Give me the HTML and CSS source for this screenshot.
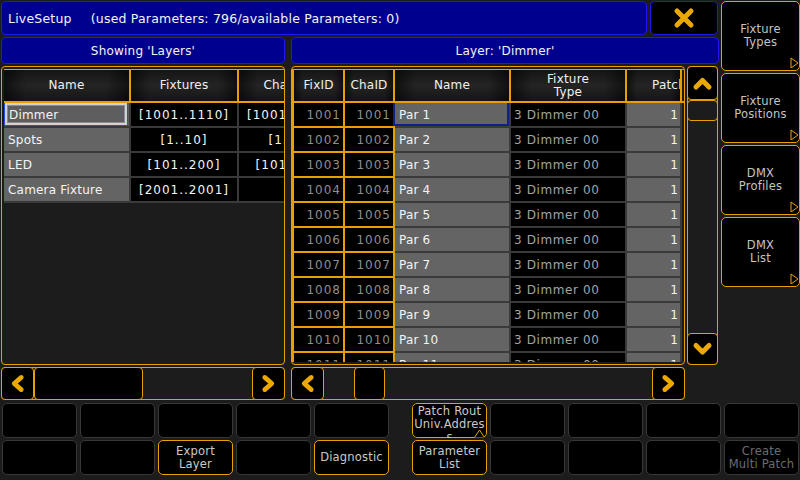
FILE: index.html
```html
<!DOCTYPE html>
<html>
<head>
<meta charset="utf-8">
<title>LiveSetup</title>
<link rel="stylesheet" href="styles.css">
</head>
<body>
<div class="screen">
  <div class="top">
    <div class="content">
      <div class="titlerow">
        <div class="title"><span>LiveSetup</span><span class="t2">(used Parameters: 796/available Parameters: 0)</span></div>
        <div class="close">
          <svg width="24" height="24" viewBox="0 0 24 24"><path d="M5 5 L19 19 M19 5 L5 19" stroke="#eaa800" stroke-width="5" stroke-linecap="round" fill="none"/></svg>
        </div>
      </div>
      <div class="subrow">
        <div class="sub sub-l">Showing 'Layers'</div>
        <div class="sub sub-r">Layer: 'Dimmer'</div>
      </div>
      <div class="panes">
        <div class="lcol">
          <div class="panel">
            <div class="hdr">
              <div class="hc lc-name">Name</div>
              <div class="hc lc-fix">Fixtures</div>
              <div class="hc lc-cha">Channels</div>
            </div>
            <div class="tbody">
              <div class="row">
                <div class="c lc-name gray left focus-l">Dimmer</div>
                <div class="c lc-fix blk num">[1001..1110]</div>
                <div class="c lc-cha blk num">[1001..1110]</div>
              </div>
              <div class="row">
                <div class="c lc-name gray left">Spots</div>
                <div class="c lc-fix blk num">[1..10]</div>
                <div class="c lc-cha blk num">[1..10]</div>
              </div>
              <div class="row">
                <div class="c lc-name gray left">LED</div>
                <div class="c lc-fix blk num">[101..200]</div>
                <div class="c lc-cha blk num">[101..200]</div>
              </div>
              <div class="row">
                <div class="c lc-name gray left">Camera Fixture</div>
                <div class="c lc-fix blk num">[2001..2001]</div>
                <div class="c lc-cha blk num"></div>
              </div>
            </div>
          </div>
          <div class="hscroll">
            <div class="sbtn sb-l"><svg width="33" height="33" viewBox="0 0 33 33"><polyline points="20.5,10 13,16.5 20.5,23" stroke="#eaa800" stroke-width="5" stroke-linecap="round" stroke-linejoin="round" fill="none"/></svg></div>
            <div class="thumb th-l"></div>
            <div class="spacer"></div>
            <div class="sbtn sb-r"><svg width="33" height="33" viewBox="0 0 33 33"><polyline points="12.5,10 20,16.5 12.5,23" stroke="#eaa800" stroke-width="5" stroke-linecap="round" stroke-linejoin="round" fill="none"/></svg></div>
          </div>
        </div>
        <div class="rcol">
          <div class="panel">
            <div class="hdr">
              <div class="hc rc-fid og first">FixID</div>
              <div class="hc rc-cid og">ChaID</div>
              <div class="hc rc-name">Name</div>
              <div class="hc rc-type">Fixture<br>Type</div>
              <div class="hc rc-patch patch-h">Patch</div>
            </div>
            <div class="tbody" id="rbody">
              <div class="row"><div class="c rc-fid og first id">1001</div><div class="c rc-cid og id">1001</div><div class="c rc-name gray left focus-r">Par 1</div><div class="c rc-type blk type">3 Dimmer 00</div><div class="c rc-patch gray right">1</div></div>
              <div class="row"><div class="c rc-fid og first id">1002</div><div class="c rc-cid og id">1002</div><div class="c rc-name gray left">Par 2</div><div class="c rc-type blk type">3 Dimmer 00</div><div class="c rc-patch gray right">1</div></div>
              <div class="row"><div class="c rc-fid og first id">1003</div><div class="c rc-cid og id">1003</div><div class="c rc-name gray left">Par 3</div><div class="c rc-type blk type">3 Dimmer 00</div><div class="c rc-patch gray right">1</div></div>
              <div class="row"><div class="c rc-fid og first id">1004</div><div class="c rc-cid og id">1004</div><div class="c rc-name gray left">Par 4</div><div class="c rc-type blk type">3 Dimmer 00</div><div class="c rc-patch gray right">1</div></div>
              <div class="row"><div class="c rc-fid og first id">1005</div><div class="c rc-cid og id">1005</div><div class="c rc-name gray left">Par 5</div><div class="c rc-type blk type">3 Dimmer 00</div><div class="c rc-patch gray right">1</div></div>
              <div class="row"><div class="c rc-fid og first id">1006</div><div class="c rc-cid og id">1006</div><div class="c rc-name gray left">Par 6</div><div class="c rc-type blk type">3 Dimmer 00</div><div class="c rc-patch gray right">1</div></div>
              <div class="row"><div class="c rc-fid og first id">1007</div><div class="c rc-cid og id">1007</div><div class="c rc-name gray left">Par 7</div><div class="c rc-type blk type">3 Dimmer 00</div><div class="c rc-patch gray right">1</div></div>
              <div class="row"><div class="c rc-fid og first id">1008</div><div class="c rc-cid og id">1008</div><div class="c rc-name gray left">Par 8</div><div class="c rc-type blk type">3 Dimmer 00</div><div class="c rc-patch gray right">1</div></div>
              <div class="row"><div class="c rc-fid og first id">1009</div><div class="c rc-cid og id">1009</div><div class="c rc-name gray left">Par 9</div><div class="c rc-type blk type">3 Dimmer 00</div><div class="c rc-patch gray right">1</div></div>
              <div class="row"><div class="c rc-fid og first id">1010</div><div class="c rc-cid og id">1010</div><div class="c rc-name gray left">Par 10</div><div class="c rc-type blk type">3 Dimmer 00</div><div class="c rc-patch gray right">1</div></div>
              <div class="row"><div class="c rc-fid og first id">1011</div><div class="c rc-cid og id">1011</div><div class="c rc-name gray left">Par 11</div><div class="c rc-type blk type">3 Dimmer 00</div><div class="c rc-patch gray right">1</div></div>
            </div>
          </div>
          <div class="hscroll">
            <div class="sbtn sb-l"><svg width="33" height="33" viewBox="0 0 33 33"><polyline points="20.5,10 13,16.5 20.5,23" stroke="#eaa800" stroke-width="5" stroke-linecap="round" stroke-linejoin="round" fill="none"/></svg></div>
            <div class="thumb th-r"></div>
            <div class="spacer"></div>
            <div class="sbtn sb-r"><svg width="33" height="33" viewBox="0 0 33 33"><polyline points="12.5,10 20,16.5 12.5,23" stroke="#eaa800" stroke-width="5" stroke-linecap="round" stroke-linejoin="round" fill="none"/></svg></div>
          </div>
        </div>
        <div class="vscroll">
          <div class="vbtn vb-up"><svg width="29" height="32" viewBox="0 0 29 32"><polyline points="8,20 14.5,13.5 21,20" stroke="#eaa800" stroke-width="5" stroke-linecap="round" stroke-linejoin="round" fill="none"/></svg></div>
          <div class="vthumb"></div>
          <div class="spacer"></div>
          <div class="vbtn vb-dn"><svg width="29" height="30" viewBox="0 0 29 30"><polyline points="8,11.5 14.5,18 21,11.5" stroke="#eaa800" stroke-width="5" stroke-linecap="round" stroke-linejoin="round" fill="none"/></svg></div>
        </div>
      </div>
    </div>
    <div class="side">
      <div class="sidebtn">Fixture<br>Types<svg class="tri" width="9" height="12" viewBox="0 0 9 12"><polygon points="1,1 8,6 1,11" fill="#000" stroke="#e8a000" stroke-width="1"/></svg></div>
      <div class="sidebtn">Fixture<br>Positions<svg class="tri" width="9" height="12" viewBox="0 0 9 12"><polygon points="1,1 8,6 1,11" fill="#000" stroke="#e8a000" stroke-width="1"/></svg></div>
      <div class="sidebtn">DMX<br>Profiles<svg class="tri" width="9" height="12" viewBox="0 0 9 12"><polygon points="1,1 8,6 1,11" fill="#000" stroke="#e8a000" stroke-width="1"/></svg></div>
      <div class="sidebtn">DMX<br>List<svg class="tri" width="9" height="12" viewBox="0 0 9 12"><polygon points="1,1 8,6 1,11" fill="#000" stroke="#e8a000" stroke-width="1"/></svg></div>
    </div>
  </div>
  <div class="bottom">
    <div class="brow">
      <div class="btn"></div>
      <div class="btn"></div>
      <div class="btn"></div>
      <div class="btn"></div>
      <div class="btn"></div>
      <div class="btn active topalign group2">Patch Rout<br>Univ.Addres<br>s<svg class="notch" width="11" height="9" viewBox="0 0 11 9"><polyline points="0.5,8.5 5.5,1 10.5,8.5" fill="#000" stroke="#e8a000" stroke-width="1"/></svg></div>
      <div class="btn"></div>
      <div class="btn"></div>
      <div class="btn"></div>
      <div class="btn"></div>
    </div>
    <div class="brow">
      <div class="btn"></div>
      <div class="btn"></div>
      <div class="btn active">Export<br>Layer</div>
      <div class="btn"></div>
      <div class="btn active">Diagnostic</div>
      <div class="btn active group2">Parameter<br>List</div>
      <div class="btn"></div>
      <div class="btn"></div>
      <div class="btn"></div>
      <div class="btn disabled">Create<br>Multi Patch</div>
    </div>
  </div>
</div>
</body>
</html>
```
FILE: styles.css
```css
* { box-sizing: border-box; margin: 0; padding: 0; }
html, body { width: 800px; height: 480px; overflow: hidden; background: #1c1c1c; }
body {
  font-family: "DejaVu Sans", "Noto Sans", sans-serif;
  font-size: 12px;
  color: #ececec;
  letter-spacing: 0.2px;
}
.screen { width: 800px; height: 480px; display: flex; flex-direction: column; }
.top { height: 401px; display: flex; flex-shrink: 0; }
.content { width: 720px; padding: 1px 0 0 1px; display: flex; flex-direction: column; }

.titlerow { height: 34px; display: flex; gap: 3px; flex-shrink: 0; }
.title {
  width: 646px; background: #00008e; border: 1px solid #1a1aee; border-radius: 5px;
  display: flex; align-items: center; padding-left: 6px; white-space: nowrap;
  font-size: 12.5px; color: #f4f4f4;
}
.title .t2 { margin-left: 19px; }
.close {
  width: 68px; background: #000; border: 1px solid #1a1aee; border-radius: 5px;
  display: flex; align-items: center; justify-content: center;
}

.subrow { height: 27px; margin-top: 2px; display: flex; gap: 6px; flex-shrink: 0; }
.sub {
  background: #00008e; border: 1px solid #1a1aee; border-radius: 5px;
  display: flex; align-items: center; justify-content: center; color: #f4f4f4;
}
.sub-l { width: 284px; }
.sub-r { width: 428px; }

.panes { height: 335px; margin-top: 2px; display: flex; gap: 0; }
.lcol { width: 284px; display: flex; flex-direction: column; gap: 2px; }
.rcol { width: 394px; margin-left: 6px; display: flex; flex-direction: column; gap: 2px; }

.panel {
  height: 299px; border: 1px solid #e8a000; border-radius: 4px; overflow: hidden;
  background: #1c1c1c; display: flex; flex-direction: column; padding: 2px 0 2px 0;
}
.lcol .panel { padding-left: 2px; }

.hdr {
  height: 34px; flex-shrink: 0; display: flex; border-top: 1px solid #e8a000;
  border-bottom: 2px solid #e8a000; white-space: nowrap;
}
.hc {
  flex-shrink: 0; height: 31px; border-right: 2px solid #e8a000;
  display: flex; align-items: center; justify-content: center; text-align: center;
  line-height: 13px; overflow: hidden; color: #f0f0f0;
  background:
    linear-gradient(to right, rgba(0,0,0,0.55), rgba(0,0,0,0) 18%, rgba(0,0,0,0) 82%, rgba(0,0,0,0.55)),
    linear-gradient(to bottom, #151515, #242424 50%, #151515);
}
.hc.first, .c.first { border-left: 2px solid #e8a000; }
.patch-h { justify-content: flex-start; padding-left: 25px; }

.tbody { flex: 1; min-height: 0; overflow: hidden; }
.row { display: flex; height: 25px; white-space: nowrap; }
.c {
  flex-shrink: 0; height: 25px; border-right: 2px solid #3a3a3a; border-bottom: 2px solid #3a3a3a;
  display: flex; align-items: center; justify-content: center; overflow: hidden; position: relative;
}
.c.og { border-right-color: #e8a000; border-bottom-color: #e8a000; }
.gray { background: #646464; color: #f4f4f4; }
.blk { background: #000; color: #f4f4f4; }
.left { justify-content: flex-start; padding-left: 4px; }
.right { justify-content: flex-end; padding-right: 2px; }
.num { letter-spacing: 1px; }
.id { background: #000; color: #8e8e8e; justify-content: flex-end; padding-right: 2px; letter-spacing: 1px; }
.type { justify-content: flex-start; padding-left: 3px; color: #a4a4a4; letter-spacing: 0.6px; }

.lc-name { width: 127px; }
.lc-fix { width: 108px; }
.lc-cha { width: 108px; }
.rc-fid { width: 53px; }
.rc-cid { width: 50px; }
.rc-name { width: 116px; }
.rc-type { width: 116px; }
.rc-patch { width: 55px; }

.focus-l::after {
  content: ""; position: absolute; left: 0; top: -1px; right: 1px; bottom: 0;
  border: 1px solid #2a4ae8;
  box-shadow: inset 0 0 0 2px #d2d2d2, inset 0 0 0 3px #8e8e8e;
  pointer-events: none;
}
.focus-l { background: #5e5e5e; padding-left: 5px; }
.focus-r { overflow: visible; }
.focus-r::after {
  content: ""; position: absolute; left: -2px; top: -2px; right: 0; bottom: 0;
  border: 2px solid #10208a; pointer-events: none;
}

.hscroll {
  height: 33px; border: 1px solid #e8a000; border-radius: 4px; display: flex; background: #1c1c1c;
}
.sbtn {
  width: 33px; margin: -1px 0; background: #000; border: 1px solid #e8a000; border-radius: 4px;
  flex-shrink: 0; display: flex; align-items: center; justify-content: center;
}
.sb-l { margin-left: -1px; }
.sb-r { margin-right: -1px; }
.thumb { margin: -1px 0; background: #000; border: 1px solid #e8a000; border-radius: 4px; flex-shrink: 0; }
.th-l { width: 109px; }
.th-r { width: 31px; margin-left: 30px; }
.spacer { flex: 1; }

.vscroll {
  width: 31px; height: 299px; margin-left: 2px; border: 1px solid #e8a000; border-radius: 4px;
  display: flex; flex-direction: column; background: #1c1c1c;
}
.vbtn {
  margin: 0 -1px; background: #000; border: 1px solid #e8a000; border-radius: 4px; flex-shrink: 0;
  display: flex; align-items: center; justify-content: center;
}
.vb-up { height: 34px; margin-top: -1px; }
.vb-dn { height: 32px; margin-bottom: -1px; }
.vthumb { height: 21px; margin: 0 -1px; border: 1px solid #e8a000; border-radius: 4px; flex-shrink: 0; }

.side { width: 79px; margin-left: 1px; padding-top: 1px; display: flex; flex-direction: column; gap: 2px; }
.sidebtn {
  height: 70px; background: #000; border: 1px solid #e8a000; border-radius: 5px; position: relative;
  display: flex; align-items: center; justify-content: center; text-align: center;
  line-height: 13px; color: #c4c4c4; font-size: 11.5px;
}
.tri { position: absolute; right: 0; bottom: 1px; }

.bottom { margin-top: 2px; display: flex; flex-direction: column; gap: 2px; }
.brow { height: 35px; display: flex; gap: 3px; padding-left: 2px; }
.btn {
  width: 75px; height: 35px; background: #000; border: 1px solid #383838; border-radius: 5px;
  display: flex; align-items: center; justify-content: center; text-align: center;
  line-height: 13px; color: #cacaca; overflow: hidden; position: relative; font-size: 11.5px;
  white-space: nowrap;
}
.btn.group2 { margin-left: 20px; }
.btn.active { border-color: #e8a000; }
.btn.disabled { color: #6c6c6c; }
.btn.topalign { align-items: flex-start; padding-top: 1px; overflow: visible; }
.btn.topalign { clip-path: inset(0 0 0 0 round 5px); }
.notch { position: absolute; left: 61px; bottom: -1px; }
```
